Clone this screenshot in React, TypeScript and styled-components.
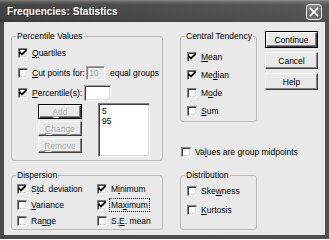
import React from 'react';
import styled, { createGlobalStyle } from 'styled-components';

const Global = createGlobalStyle`
  html, body { margin: 0; padding: 0; background: #fff; }
  body { font-family: "Liberation Sans", Arial, sans-serif; font-size: 8.5px; color: #000; }
  #root { width: 329px; height: 239px; }
  * { box-sizing: border-box; }
`;

const Window = styled.div`
  width: 329px;
  height: 239px;
  display: flex;
  flex-direction: column;
  background: linear-gradient(to right, #4a4a4a, #505050);
  overflow: hidden;
`;

const TitleBar = styled.div`
  height: 22px;
  flex: none;
  display: flex;
  align-items: center;
  justify-content: space-between;
  padding: 1px 7px 0 7px;
  background:
    linear-gradient(to right, rgba(0,0,0,0.08), rgba(255,255,255,0.08)),
    linear-gradient(to bottom, #8a8a8a 0px, #626262 2px, #4a4a4a 5px, #474747 17px, #3e3e3e 22px);
`;

const Title = styled.span`
  font-family: "Liberation Sans", Arial, sans-serif;
  font-weight: bold;
  font-size: 10px;
  color: #fff;
  text-shadow: 1px 1px 0 #2a2a2a;
  letter-spacing: 0.05px;
`;

const CloseButton = styled.div`
  width: 16px;
  height: 16px;
  border: 1px solid #e6e6e6;
  border-radius: 3px;
  background: linear-gradient(to bottom, #8a8a8a, #6a6a6a 60%, #737373);
  display: flex;
  align-items: center;
  justify-content: center;
`;

const Body = styled.div`
  flex: 1;
  margin: 0 4px 4px 4px;
  background: #e9e9e9;
  padding: 9px 0 0 7px;
  display: flex;
  flex-direction: column;
`;

const TopRow = styled.div`
  display: flex;
  align-items: flex-start;
`;

const BottomRow = styled.div`
  display: flex;
  align-items: stretch;
  margin-top: 9px;
`;

const Group = styled.fieldset<{ $w: number; $pt: number; $pb: number; $ml?: number }>`
  margin: 0 0 0 ${p => p.$ml ?? 0}px;
  padding: ${p => p.$pt}px 4px ${p => p.$pb}px 4px;
  border: 1px solid #bcbcbc;
  border-radius: 3px;
  width: ${p => p.$w}px;
  min-width: 0;
`;

const Legend = styled.legend`
  padding: 0 1px;
  font-size: 8.5px;
  line-height: 10px;
  white-space: nowrap;
`;

const Row = styled.div<{ $h: number; $ml?: number }>`
  display: flex;
  align-items: center;
  height: ${p => p.$h}px;
  gap: 4px;
  white-space: nowrap;
  padding-left: ${p => p.$ml ?? 0}px;
`;

const Box = styled.span`
  width: 10px;
  height: 10px;
  flex: none;
  background: #fff;
  border: 1px solid;
  border-color: #808080 #ffffff #ffffff #808080;
  box-shadow: inset 1px 1px 0 #404040, inset -1px -1px 0 #d8d8d8;
  display: flex;
  align-items: center;
  justify-content: center;
`;

const Label = styled.span<{ $focus?: boolean }>`
  line-height: 10px;
  outline: ${p => (p.$focus ? '1px dotted #000' : 'none')};
  outline-offset: 1px;
`;

const Field = styled.div<{ $w: number; $h: number; $disabled?: boolean; $ml?: number }>`
  width: ${p => p.$w}px;
  height: ${p => p.$h}px;
  margin-left: ${p => p.$ml ?? 0}px;
  flex: none;
  background: ${p => (p.$disabled ? '#e9e9e9' : '#fff')};
  border: 1px solid;
  border-color: #a0a0a0 #ffffff #ffffff #a0a0a0;
  box-shadow: ${p => (p.$disabled ? 'inset 1px 1px 0 #808080' : 'inset 1px 1px 0 #404040, inset -1px -1px 0 #d8d8d8')};
  color: ${p => (p.$disabled ? '#a8a8a8' : '#000')};
  padding: 0 2px;
  line-height: ${p => p.$h - 2}px;
`;

const Trailing = styled.span`
  margin-left: 1px;
  line-height: 10px;
`;

const ListArea = styled.div`
  display: flex;
  align-items: flex-start;
`;

const SmallButtons = styled.div`
  display: flex;
  flex-direction: column;
  gap: 2px;
  margin: 1px 0 0 22px;
`;

const PushButton = styled.div<{ $w: number; $h: number; $default?: boolean; $disabled?: boolean }>`
  width: ${p => p.$w}px;
  height: ${p => p.$h}px;
  display: flex;
  align-items: center;
  justify-content: center;
  background: #e9e9e9;
  font-size: 8.5px;
  border: 1px solid;
  border-color: ${p => (p.$default ? '#000' : '#ffffff #404040 #404040 #ffffff')};
  box-shadow: ${p =>
    p.$default
      ? 'inset 1px 1px 0 #fff, inset -1px -1px 0 #404040, inset -2px -2px 0 #808080'
      : 'inset -1px -1px 0 #808080'};
  color: ${p => (p.$disabled ? '#a4a4a4' : '#000')};
  text-shadow: ${p => (p.$disabled ? '1px 1px 0 #fff' : 'none')};
`;

const ListBox = styled.div`
  width: 52px;
  height: 54px;
  margin-left: 16px;
  background: #fff;
  border: 1px solid;
  border-color: #808080 #ffffff #ffffff #808080;
  box-shadow: inset 1px 1px 0 #404040, inset -1px -1px 0 #d8d8d8;
  padding: 2px 3px;
  line-height: 10px;
`;

const MiddleColumn = styled.div`
  width: 77px;
  margin-left: 17px;
  display: flex;
  flex-direction: column;
`;

const MidpointsRow = styled.div`
  margin-top: 21px;
`;

const ButtonColumn = styled.div`
  width: 53px;
  margin-left: 8px;
  display: flex;
  flex-direction: column;
  gap: 4px;
`;

const TwoColumns = styled.div`
  display: grid;
  grid-template-columns: 80px 68px;
`;

const CheckMark = () => (
  <svg width="8" height="8" viewBox="0 0 8 8">
    <path d="M1.1 3.5 L3 5.5 L6.9 1.6" fill="none" stroke="#000" strokeWidth="1.8" strokeLinecap="square" />
  </svg>
);

type CheckProps = {
  checked?: boolean;
  h: number;
  ml?: number;
  focus?: boolean;
  children: React.ReactNode;
  after?: React.ReactNode;
};

const CheckItem = ({ checked, h, ml, focus, children, after }: CheckProps) => (
  <Row $h={h} $ml={ml}>
    <Box>{checked && <CheckMark />}</Box>
    <Label $focus={focus}>{children}</Label>
    {after}
  </Row>
);

export default function App() {
  return (
    <>
      <Global />
      <Window>
        <TitleBar>
          <Title>Frequencies: Statistics</Title>
          <CloseButton>
            <svg width="10" height="10" viewBox="0 0 10 10">
              <path d="M1.5 1.5 L8.5 8.5 M8.5 1.5 L1.5 8.5" stroke="#fff" strokeWidth="1.7" strokeLinecap="square" />
            </svg>
          </CloseButton>
        </TitleBar>
        <Body>
          <TopRow>
            <Group $w={152} $pt={2} $pb={3}>
              <Legend>Percentile Values</Legend>
              <CheckItem checked h={20} ml={2}><u>Q</u>uartiles</CheckItem>
              <CheckItem
                h={20}
                ml={2}
                after={
                  <>
                    <Field $w={19} $h={14} $ml={-3} $disabled>10</Field>
                    <Trailing>equal groups</Trailing>
                  </>
                }
              >
                <u>C</u>ut points for:
              </CheckItem>
              <CheckItem checked h={20} ml={2} after={<Field $w={27} $h={16} $ml={-2} />}>
                <u>P</u>ercentile(s):
              </CheckItem>
              <ListArea>
                <SmallButtons>
                  <PushButton $w={44} $h={15} $default $disabled><u>A</u>dd</PushButton>
                  <PushButton $w={44} $h={15} $disabled><u>C</u>hange</PushButton>
                  <PushButton $w={44} $h={15} $disabled><u>R</u>emove</PushButton>
                </SmallButtons>
                <ListBox>
                  <div>5</div>
                  <div>95</div>
                </ListBox>
              </ListArea>
            </Group>
            <MiddleColumn>
              <Group $w={77} $pt={7} $pb={1}>
                <Legend>Central Tendency</Legend>
                <CheckItem checked h={18} ml={2}><u>M</u>ean</CheckItem>
                <CheckItem checked h={18} ml={2}>Me<u>d</u>ian</CheckItem>
                <CheckItem h={18} ml={2}>M<u>o</u>de</CheckItem>
                <CheckItem h={18} ml={2}><u>S</u>um</CheckItem>
              </Group>
              <MidpointsRow>
                <CheckItem h={18} ml={1}>Va<u>l</u>ues are group midpoints</CheckItem>
              </MidpointsRow>
            </MiddleColumn>
            <ButtonColumn>
              <PushButton $w={53} $h={17} $default>Continue</PushButton>
              <PushButton $w={53} $h={17}>Cancel</PushButton>
              <PushButton $w={53} $h={17}>Help</PushButton>
            </ButtonColumn>
          </TopRow>
          <BottomRow>
            <Group $w={152} $pt={1} $pb={0}>
              <Legend>Dispersion</Legend>
              <TwoColumns>
                <CheckItem checked h={16} ml={1}>S<u>t</u>d. deviation</CheckItem>
                <CheckItem checked h={16} ml={1}>M<u>i</u>nimum</CheckItem>
                <CheckItem h={16} ml={1}><u>V</u>ariance</CheckItem>
                <CheckItem checked h={16} ml={1} focus>Ma<u>x</u>imum</CheckItem>
                <CheckItem h={16} ml={1}>Ra<u>n</u>ge</CheckItem>
                <CheckItem h={16} ml={1}>S.<u>E</u>. mean</CheckItem>
              </TwoColumns>
            </Group>
            <Group $w={77} $pt={1} $pb={10} $ml={17}>
              <Legend>Distribution</Legend>
              <CheckItem h={19} ml={2}>Ske<u>w</u>ness</CheckItem>
              <CheckItem h={19} ml={2}><u>K</u>urtosis</CheckItem>
            </Group>
          </BottomRow>
        </Body>
      </Window>
    </>
  );
}
